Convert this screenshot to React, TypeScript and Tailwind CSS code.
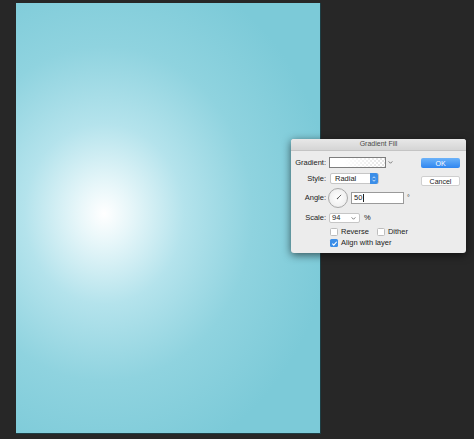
import React from 'react';

const font = { fontFamily: '"Liberation Sans", Arial, sans-serif' };

const Label: React.FC<{ children: React.ReactNode }> = ({ children }) => (
  <span className="w-[37px] pr-[2px] text-right text-[7.5px] text-[#222]">{children}</span>
);

const Checkbox: React.FC<{ checked?: boolean; label: string }> = ({ checked, label }) => (
  <div className="flex items-center gap-[3px]">
    {checked ? (
      <span className="flex h-[8px] w-[8px] items-center justify-center rounded-[1.5px] bg-[#3b8ee8]">
        <svg viewBox="0 0 8 8" className="h-[7px] w-[7px]">
          <path d="M1.5 4.2 L3.2 5.8 L6.5 2" stroke="#fff" strokeWidth="1.3" fill="none" />
        </svg>
      </span>
    ) : (
      <span className="h-[8px] w-[8px] rounded-[1.5px] border border-[#bdbdbd] bg-white" />
    )}
    <span className="text-[7.5px] text-[#222]">{label}</span>
  </div>
);

const Chevron = () => (
  <svg viewBox="0 0 6 4" className="h-[3px] w-[5px]">
    <path d="M0.5 0.5 L3 3 L5.5 0.5" stroke="#555" strokeWidth="1" fill="none" />
  </svg>
);

export default function App() {
  return (
    <div className="relative h-[439px] w-[474px] overflow-hidden bg-[#272727]" style={font}>
      <div className="pl-[16px] pt-[3px]">
        <div className="h-[431px] w-[305px] border-b border-r border-[#1d3f45] bg-[radial-gradient(ellipse_75%_60%_at_29%_49%,#ffffff_0%,#e6f6f9_12%,#b4e3ec_35%,#8fd3df_65%,#7ccad8_100%)]" />
      </div>

      <div className="absolute left-[291px] top-[139px] h-[114px] w-[175px] overflow-hidden rounded-[3px] bg-[#ececec] shadow-[0_2px_8px_rgba(0,0,0,0.6)]">
        <div className="flex h-[12px] items-center justify-center border-b border-[#c4c4c4] bg-[linear-gradient(#e8e8e8,#d5d5d5)] text-[7px] text-[#4a4a4a]">
          Gradient Fill
        </div>
        <div className="flex">
          <div className="flex w-[128px] flex-col">
            <div className="mt-[6px] flex h-[11px] items-center">
              <Label>Gradient:</Label>
              <div className="ml-[1px] h-[11px] w-[57px] border border-[#7d7d7d] bg-[linear-gradient(90deg,#ffffff_25%,rgba(255,255,255,0.35)),repeating-conic-gradient(#d6d6d6_0_25%,#ffffff_0_50%)] [background-size:100%_100%,4px_4px]" />
              <span className="ml-[2px] flex items-center">
                <Chevron />
              </span>
            </div>
            <div className="mt-[5px] flex h-[11px] items-center">
              <Label>Style:</Label>
              <div className="ml-[2px] flex h-[11px] w-[49px] items-center justify-between rounded-[2px] border border-[#c6c6c6] bg-white pl-[4px]">
                <span className="text-[7.5px] text-[#222]">Radial</span>
                <span className="flex h-[11px] w-[8px] items-center justify-center rounded-r-[2px] bg-[#3b8ee8]">
                  <svg viewBox="0 0 8 10" className="h-[8px] w-[6px]">
                    <path d="M2 4 L4 2 L6 4 M2 6 L4 8 L6 6" stroke="#fff" strokeWidth="1" fill="none" />
                  </svg>
                </span>
              </div>
            </div>
            <div className="mt-[4px] flex h-[20px] items-center">
              <Label>Angle:</Label>
              <div className="flex h-[20px] w-[20px] items-center justify-center rounded-full border border-[#a9a9a9] bg-[radial-gradient(circle,#ffffff_0%,#f2f2f2_60%,#dcdcdc_100%)]">
                <svg viewBox="0 0 20 20" className="h-[18px] w-[18px]">
                  <path d="M9.5 10.5 L13.5 6.5" stroke="#555" strokeWidth="1" />
                  <circle cx="9.5" cy="10.5" r="0.8" fill="#555" />
                </svg>
              </div>
              <div className="ml-[3px] flex h-[12px] w-[53px] items-center border border-[#9a9a9a] bg-white pl-[2px] text-[7.5px] text-[#222]">
                50<span className="ml-[0.5px] h-[8px] w-[1px] bg-[#222]" />
              </div>
              <span className="ml-[3px] text-[7px] text-[#333]">°</span>
            </div>
            <div className="mt-[5px] flex h-[10px] items-center">
              <Label>Scale:</Label>
              <div className="ml-[1px] flex h-[10px] w-[31px] items-center justify-between rounded-[2px] border border-[#c6c6c6] bg-white pl-[2px] pr-[3px]">
                <span className="text-[7.5px] text-[#222]">94</span>
                <Chevron />
              </div>
              <span className="ml-[4px] text-[7.5px] text-[#222]">%</span>
            </div>
            <div className="ml-[39px] mt-[4px] flex h-[10px] items-center gap-[8px]">
              <Checkbox label="Reverse" />
              <Checkbox label="Dither" />
            </div>
            <div className="ml-[39px] mt-[1px] flex h-[10px] items-center">
              <Checkbox checked label="Align with layer" />
            </div>
          </div>
          <div className="ml-[2px] flex flex-col">
            <button className="mt-[7px] h-[10px] w-[39px] rounded-[2px] bg-[linear-gradient(#6cb3f9,#2f86f0)] text-[7px] leading-none text-white">
              OK
            </button>
            <button className="mt-[8px] h-[10px] w-[39px] rounded-[2px] border border-[#cfcfcf] bg-white text-[7px] leading-none text-[#222]">
              Cancel
            </button>
          </div>
        </div>
      </div>
    </div>
  );
}
